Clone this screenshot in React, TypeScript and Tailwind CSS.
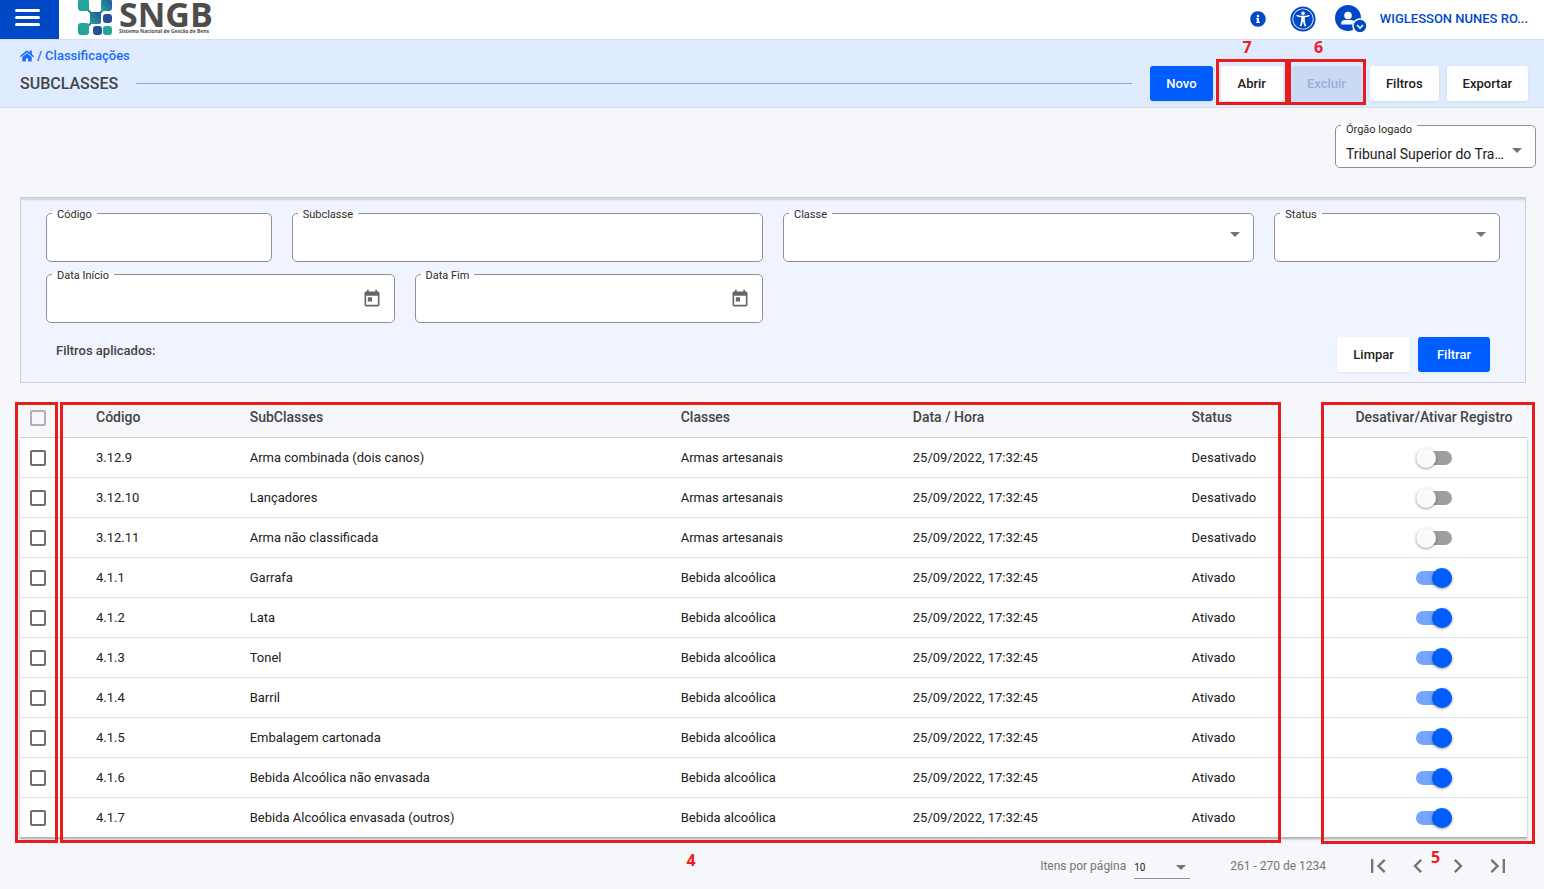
import { useState } from 'react';
import type { ReactNode } from 'react';
import { FaHome, FaInfoCircle, FaUniversalAccess } from 'react-icons/fa';
import { MdArrowDropDown, MdChevronLeft, MdChevronRight, MdFirstPage, MdLastPage, MdToday } from 'react-icons/md';

type Row = { code: string; name: string; group: string; active: boolean };

const DATE = '25/09/2022, 17:32:45';

const ROWS: Row[] = [
  { code: '3.12.9', name: 'Arma combinada (dois canos)', group: 'Armas artesanais', active: false },
  { code: '3.12.10', name: 'Lançadores', group: 'Armas artesanais', active: false },
  { code: '3.12.11', name: 'Arma não classificada', group: 'Armas artesanais', active: false },
  { code: '4.1.1', name: 'Garrafa', group: 'Bebida alcoólica', active: true },
  { code: '4.1.2', name: 'Lata', group: 'Bebida alcoólica', active: true },
  { code: '4.1.3', name: 'Tonel', group: 'Bebida alcoólica', active: true },
  { code: '4.1.4', name: 'Barril', group: 'Bebida alcoólica', active: true },
  { code: '4.1.5', name: 'Embalagem cartonada', group: 'Bebida alcoólica', active: true },
  { code: '4.1.6', name: 'Bebida Alcoólica não envasada', group: 'Bebida alcoólica', active: true },
  { code: '4.1.7', name: 'Bebida Alcoólica envasada (outros)', group: 'Bebida alcoólica', active: true },
];

const PAGER = [
  { label: 'Primeira página', Icon: MdFirstPage },
  { label: 'Página anterior', Icon: MdChevronLeft },
  { label: 'Próxima página', Icon: MdChevronRight },
  { label: 'Última página', Icon: MdLastPage },
];

function Logo() {
  return (
    <a href="#" aria-label="SNGB" className="flex items-end gap-1.5 ml-[19px] h-[39px] pb-1">
      <svg width="35" height="36" viewBox="0 0 35 36">
        <defs>
          <linearGradient id="mix" x1="0" y1="1" x2="1" y2="0">
            <stop offset="0" stopColor="#22a699" />
            <stop offset="1" stopColor="#28509a" />
          </linearGradient>
        </defs>
        <path d="M9 10 14 15M26 10 21 15M14 23 9 28" stroke="#25808f" strokeWidth="2" />
        <rect x="0" y="0" width="11" height="12" rx="3" fill="#22a699" />
        <rect x="23" y="0" width="11" height="12" rx="3" fill="url(#mix)" />
        <rect x="12" y="13" width="11" height="12" rx="2" fill="url(#mix)" />
        <rect x="25" y="15" width="9" height="9" rx="3" fill="#28509a" />
        <rect x="0" y="24" width="11" height="12" rx="3" fill="#22a699" />
        <rect x="15" y="27" width="9" height="9" rx="3" fill="#28509a" />
        <rect x="25" y="27" width="9" height="9" rx="3" fill="#22a699" />
      </svg>
      <span className="flex flex-col text-[#4d4d4d] font-['Open_Sans',sans-serif] font-bold">
        <span className="text-[34px] leading-7">SNGB</span>
        <span className="text-[5px] leading-[7px]">Sistema Nacional de Gestão de Bens</span>
      </span>
    </a>
  );
}

function UserIcon() {
  return (
    <svg width="32" height="28" viewBox="0 0 32 28">
      <circle cx="13" cy="13" r="13" fill="#0049c6" />
      <circle cx="13" cy="10.500" r="3.800" fill="#fff" />
      <path d="M6 19.500v-1c0-2.500 2-3.500 4-3.500h6c2 0 4 1 4 3.500v1z" fill="#fff" />
      <circle cx="25" cy="21" r="7" fill="#0049c6" stroke="#fff" strokeWidth="1.500" />
      <path d="M22 20l3 3 3-3" fill="none" stroke="#fff" strokeWidth="1.600" />
    </svg>
  );
}

function Button({ children, primary, disabled, pad = 'px-4' }: { children: ReactNode; primary?: boolean; disabled?: boolean; pad?: string }) {
  const look = primary ? 'bg-[#005dff] text-white' : disabled ? 'bg-[#cbdaf3] text-[#98b0dd]' : 'bg-white text-[#212121]';
  return (
    <button disabled={disabled} className={`h-[35px] rounded-[3px] text-[13px] font-medium shadow-[0_1px_3px_rgba(0,0,0,0.08)] ${pad} ${look}`}>
      {children}
    </button>
  );
}

// Red marker frame and number drawn over the screen
function Marker({ className, label, labelClass }: { className: string; label?: string; labelClass?: string }) {
  return (
    <div className={`absolute border-3 border-[#e81c1c] pointer-events-none ${className}`}>
      {label && <span className={`absolute font-['Open_Sans',sans-serif] text-base leading-4 font-bold text-[#ee1c25] ${labelClass}`}>{label}</span>}
    </div>
  );
}

function FieldLabel({ id, label }: { id: string; label: string }) {
  return (
    <label htmlFor={id} className="absolute left-1.5 -top-[5px] px-[5px] text-[11px] leading-[14px] text-[#2b2b2b] before:absolute before:inset-x-0 before:top-1 before:h-[3px] before:bg-white">
      <span className="relative">{label}</span>
    </label>
  );
}

function Field({ id, label, kind = 'text', className = '' }: { id: string; label: string; kind?: 'text' | 'select' | 'date'; className?: string }) {
  return (
    <div className={`relative ${className}`}>
      {kind === 'select' ? (
        <select id={id} className="block w-full h-[49px] px-2.5 appearance-none rounded-[5px] border border-[#8f9196] bg-white text-sm" />
      ) : (
        <input id={id} type="text" className="block w-full h-[49px] px-2.5 rounded-[5px] border border-[#8f9196] bg-white text-sm" />
      )}
      <FieldLabel id={id} label={label} />
      {kind === 'select' && <MdArrowDropDown size={24} className="absolute right-[7px] top-[9px] text-[#757575] pointer-events-none" />}
      {kind === 'date' && (
        <button type="button" aria-label={`Abrir calendário ${label}`} className="absolute right-[13px] top-[15px] text-[#666]">
          <MdToday size={20} />
        </button>
      )}
    </div>
  );
}

export default function App() {
  const [rows, setRows] = useState(ROWS);

  const toggle = (code: string) => setRows((list) => list.map((r) => (r.code === code ? { ...r, active: !r.active } : r)));

  return (
    <div className="min-h-screen bg-[#f5f7fb] font-[Roboto,sans-serif] text-[#212121] overflow-hidden">
      <header className="flex items-center h-10 bg-white border-b border-[#d5dfee]">
        <button aria-label="Menu" className="w-[59px] h-[39px] shrink-0 bg-[#0049c6] flex flex-col items-center justify-center gap-[4px] pr-1 pb-1">
          <span className="w-[25px] h-[3px] rounded-full bg-white" />
          <span className="w-[25px] h-[3px] rounded-full bg-white" />
          <span className="w-[25px] h-[3px] rounded-full bg-white" />
        </button>
        <Logo />
        <div className="ml-auto flex items-center pr-4 pb-0.5 text-[#0049c6]">
          <button aria-label="Informações" className="mr-6"><FaInfoCircle size={16} /></button>
          <button aria-label="Acessibilidade" className="mr-[19px]"><FaUniversalAccess size={26} /></button>
          <button className="flex items-center gap-[13px] text-[13px] font-medium">
            <UserIcon />
            <span>WIGLESSON NUNES RO...</span>
          </button>
        </div>
      </header>

      <section className="flex items-end h-[68px] pl-5 pr-4 pb-1.5 bg-[#dfebff] border-b border-[#d5dfee]">
        <div className="flex-1">
          <nav className="flex items-center gap-[3px] text-[13px] leading-4 font-medium text-[#1a6aff]">
            <a href="#" aria-label="Início"><FaHome size={14} /></a>
            <span>/</span>
            <a href="#">Classificações</a>
          </nav>
          <div className="flex items-center gap-[18px] h-[35px] mt-0.5 mr-[18px]">
            <h1 className="text-base font-medium text-[#444]">SUBCLASSES</h1>
            <hr className="flex-1 border-[#85a5d8]" />
          </div>
        </div>
        <div className="flex gap-2">
          <Button primary>Novo</Button>
          <div className="relative">
            <Button pad="px-[17px]">Abrir</Button>
            <Marker className="-left-[5px] -right-[5px] -top-[7px] -bottom-1" label="7" labelClass="left-6 -top-[23px]" />
          </div>
          <div className="relative">
            <Button disabled>Excluir</Button>
            <Marker className="-left-[3px] -right-1 -top-[7px] -bottom-1" label="6" labelClass="left-[23px] -top-[23px]" />
          </div>
          <Button>Filtros</Button>
          <Button>Exportar</Button>
        </div>
      </section>

      <div className="flex justify-end pt-[17px] pr-2">
        <div className="relative w-[201px]">
          <select id="orgao" className="block w-full h-[43px] pl-2.5 pr-[26px] pt-3.5 appearance-none rounded-[5px] border border-[#8f9196] bg-white text-sm text-ellipsis">
            <option>Tribunal Superior do Trabalho</option>
          </select>
          <label htmlFor="orgao" className="absolute left-1.5 -top-0.5 px-[5px] text-[11px] leading-[14px] text-[#2b2b2b] before:absolute before:inset-x-0 before:top-px before:h-[3px] before:bg-white">
            <span className="relative">Órgão logado</span>
          </label>
          <MdArrowDropDown size={24} className="absolute right-[7px] top-[13px] text-[#757575] pointer-events-none" />
        </div>
      </div>

      <form onSubmit={(e) => e.preventDefault()} className="mt-[29px] ml-5 mr-[18px] px-[25px] pt-[15px] pb-2.5 bg-[#eff4fe] border border-[#cbced3] shadow-[inset_0_3px_2px_-1px_#cfd6de]">
        <div className="grid grid-cols-12 gap-x-5 gap-y-3">
          <Field id="codigo" label="Código" className="col-span-2" />
          <Field id="subclasse" label="Subclasse" className="col-span-4" />
          <Field id="classe" label="Classe" kind="select" className="col-span-4" />
          <Field id="status" label="Status" kind="select" className="col-span-2" />
          <Field id="inicio" label="Data Início" kind="date" className="col-span-3" />
          <Field id="fim" label="Data Fim" kind="date" className="col-span-3" />
        </div>
        <div className="flex justify-between items-start mt-3.5 pl-2.5 pr-2.5">
          <p className="pt-1 text-[13px] font-medium text-[#444]">Filtros aplicados:</p>
          <div className="flex gap-2">
            <Button>Limpar</Button>
            <Button primary pad="px-[19px]">Filtrar</Button>
          </div>
        </div>
      </form>

      <div className="relative mt-3.5 ml-5 mr-[17px]">
        <table className="w-full table-fixed border-collapse text-[13px] text-left">
          <colgroup>
            <col className="w-[76px]" />
            <col className="w-[10.2%]" />
            <col className="w-[28.6%]" />
            <col className="w-[15.4%]" />
            <col className="w-[18.5%]" />
            <col />
            <col className="w-[186px]" />
          </colgroup>
          <thead className="text-sm text-[#444]">
            <tr className="h-10 border-b border-[#cccfd5] whitespace-nowrap">
              <th className="pl-2.5 pt-0.5"><input type="checkbox" disabled aria-label="Selecionar todos" className="block size-4 appearance-none border-2 border-[#b0b0b0] rounded-xs" /></th>
              <th className="font-medium">Código</th>
              <th className="font-medium">SubClasses</th>
              <th className="font-medium">Classes</th>
              <th className="font-medium">Data / Hora</th>
              <th className="font-medium">Status</th>
              <th className="font-medium text-center">Desativar/Ativar Registro</th>
            </tr>
          </thead>
          <tbody className="bg-white shadow-[0_2px_2px_rgba(0,0,0,0.35)]">
            {rows.map((row) => (
              <tr key={row.code} className="h-10 border-b border-[#e0e0e0] last:border-[#b5b7bb] *:pt-0.5">
                <td className="pl-2.5"><input type="checkbox" aria-label={`Selecionar ${row.code}`} className="block size-4 appearance-none border-2 border-[#6f6f6f] rounded-xs checked:bg-[#005dff]" /></td>
                <td>{row.code}</td>
                <td>{row.name}</td>
                <td>{row.group}</td>
                <td>{DATE}</td>
                <td>{row.active ? 'Ativado' : 'Desativado'}</td>
                <td>
                  <input
                    type="checkbox"
                    role="switch"
                    aria-label={`Desativar/Ativar ${row.code}`}
                    checked={row.active}
                    onChange={() => toggle(row.code)}
                    className="relative block mx-auto w-9 h-3.5 appearance-none rounded-full bg-[#9e9e9e] checked:bg-[#75a5ff] before:absolute before:left-0 before:-top-[3px] before:size-5 before:rounded-full before:bg-[#fafafa] before:shadow-[0_1px_3px_rgba(0,0,0,0.4)] checked:before:left-4 checked:before:bg-[#005dff]"
                  />
                </td>
              </tr>
            ))}
          </tbody>
        </table>
        <Marker className="-left-[5px] w-[43px] top-[5px] -bottom-[5px]" />
        <Marker className="left-10 right-[246px] top-[5px] -bottom-[5px]" label="4" labelClass="left-1/2 ml-4 -bottom-[28px]" />
        <Marker className="w-[214px] -right-2 top-[5px] -bottom-1.5" label="5" labelClass="left-[107px] -bottom-6" />
      </div>

      <footer className="flex items-center justify-end h-14 pr-8 text-xs text-[#757575]">
        <label htmlFor="tamanho">Itens por página</label>
        <div className="relative ml-2 mr-10 mt-0.5 w-14">
          <select id="tamanho" className="block w-full h-6 pt-1 appearance-none border-b border-[#8f9196] text-[10px] text-[#212121]">
            <option>10</option>
            <option>20</option>
          </select>
          <MdArrowDropDown size={24} className="absolute -right-[3px] top-0 pointer-events-none" />
        </div>
        <span>261 - 270 de 1234</span>
        <div className="flex gap-3 ml-[38px]">
          {PAGER.map(({ label, Icon }) => (
            <button key={label} aria-label={label}><Icon size={28} /></button>
          ))}
        </div>
      </footer>
    </div>
  );
}
